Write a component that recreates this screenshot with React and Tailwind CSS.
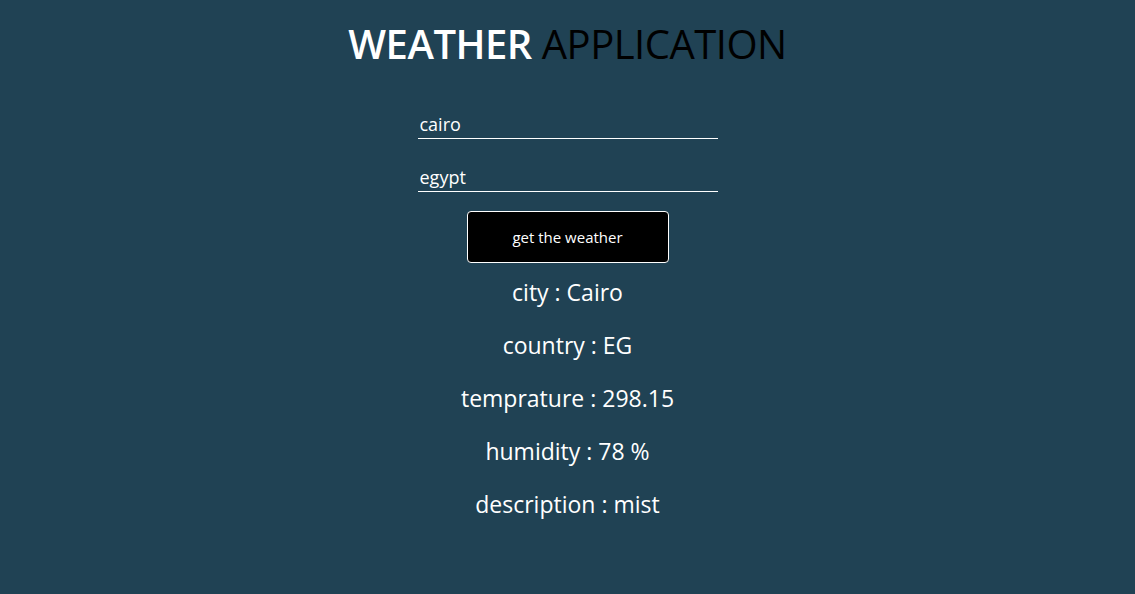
import { useState } from 'react';

const rows = [
  ['city', 'Cairo'],
  ['country', 'EG'],
  ['temprature', '298.15'],
  ['humidity', '78 %'],
  ['description', 'mist'],
];

export default function App() {
  const [city, setCity] = useState('cairo');
  const [country, setCountry] = useState('egypt');

  return (
    <main className="min-h-[594px] bg-[#204254] flex flex-col items-center font-['Open_Sans',sans-serif] text-white">
      <h1 className="mt-[19px] text-[40px] leading-[50px] tracking-[-0.5px]">
        <span className="font-semibold">WEATHER</span>{' '}
        <span className="text-black">APPLICATION</span>
      </h1>

      <form className="flex flex-col items-center mt-[40px]" onSubmit={(e) => e.preventDefault()}>
        <input
          value={city}
          onChange={(e) => setCity(e.target.value)}
          className="w-[300px] h-[30px] bg-transparent border-b border-white outline-none px-[2px] text-[18px] text-white"
        />
        <input
          value={country}
          onChange={(e) => setCountry(e.target.value)}
          className="mt-[23px] w-[300px] h-[30px] bg-transparent border-b border-white outline-none px-[2px] text-[18px] text-white"
        />
        <button
          type="submit"
          className="mt-[19px] w-[202px] h-[52px] bg-black border border-white rounded-[4px] text-[15px] text-white"
        >
          get the weather
        </button>
      </form>

      <div className="mt-[13px] flex flex-col items-center gap-[21px]">
        {rows.map(([label, value]) => (
          <p key={label} className="text-[23px] leading-[32px]">
            {label} : {value}
          </p>
        ))}
      </div>
    </main>
  );
}
